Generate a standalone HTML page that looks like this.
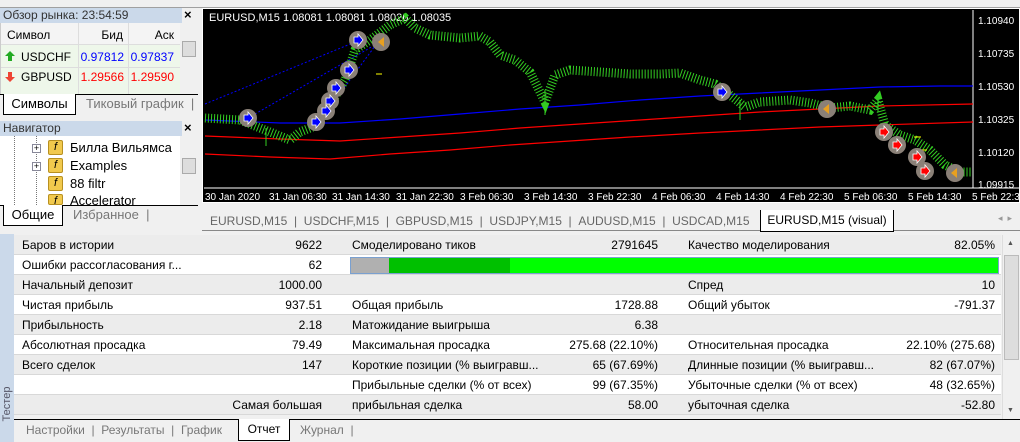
<!DOCTYPE html>
<html><head><meta charset="utf-8"><style>
*{margin:0;padding:0;box-sizing:border-box}
body{width:1020px;height:442px;overflow:hidden;background:#f0f0f0;font-family:"Liberation Sans","DejaVu Sans",sans-serif;font-size:12px;color:#000;position:relative}
.a{position:absolute;white-space:nowrap}
.hdr{background:#cbd9ea;color:#333;font-size:12px;padding-left:3px;line-height:14px}
.tab{position:absolute;font-size:12px;color:#777;line-height:18px}
.row{position:absolute;left:14px;width:987px;height:20px;border-bottom:1px solid #d8d8d8}
.row span{position:absolute;top:3px;white-space:nowrap}
.mw{position:absolute;font-size:12px;text-align:right;width:60px}
</style></head><body>
<div class="a" style="left:0;top:0;width:1020px;height:8px;background:#f0f0f0;border-bottom:1px solid #a0a0a0"></div>
<!-- Market watch -->
<div class="a hdr" style="left:0;top:8px;width:182px;height:15px">Обзор рынка: 23:54:59</div>
<div class="a" style="left:184px;top:7px;font-weight:bold;font-size:13px">×</div>
<div class="a" style="left:0;top:23px;width:198px;height:72px;background:#fff;border:1px solid #ccc"></div>
<div class="a" style="left:1px;top:23px;width:179px;height:22px;background:#f4f4f4;border-bottom:1px solid #ddd"></div>
<div class="a" style="left:7px;top:28px">Символ</div>
<div class="mw" style="left:63px;top:28px">Бид</div>
<div class="mw" style="left:114px;top:28px">Аск</div>
<div class="a" style="left:1px;top:45px;width:179px;height:50px;background:#eef7ea"></div>
<div class="a" style="left:1px;top:67px;width:179px;height:1px;background:#ddd"></div>
<div class="a" style="left:78px;top:23px;width:1px;height:72px;background:#ddd"></div>
<div class="a" style="left:128px;top:23px;width:1px;height:72px;background:#ddd"></div>
<svg class="a" style="left:5px;top:51px" width="10" height="10"><path d="M5,0L10,5H7V10H3V5H0Z" fill="#2a2"/></svg>
<svg class="a" style="left:5px;top:72px" width="10" height="10"><path d="M5,10L10,5H7V0H3V5H0Z" fill="#e43"/></svg>
<div class="a" style="left:21px;top:50px">USDCHF</div>
<div class="mw" style="left:64px;top:50px;color:#00f">0.97812</div>
<div class="mw" style="left:114px;top:50px;color:#00f">0.97837</div>
<div class="a" style="left:21px;top:70px">GBPUSD</div>
<div class="mw" style="left:64px;top:70px;color:#f00">1.29566</div>
<div class="mw" style="left:114px;top:70px;color:#f00">1.29590</div>
<div class="a" style="left:180px;top:23px;width:18px;height:72px;background:#f0f0f0"><div style="margin:18px 2px;width:14px;height:16px;background:#ddd;border:1px solid #aaa"></div></div>
<div class="a" style="left:0;top:94px;width:198px;height:1px;background:#000"></div>
<div class="a" style="left:3px;top:94px;width:73px;height:21px;background:#fff;border:1px solid #000;border-top:none;text-align:center;font-size:13px;line-height:19px">Символы</div>
<div class="tab" style="left:86px;top:95px;font-size:13px">Тиковый график &nbsp;|</div>
<!-- Navigator -->
<div class="a hdr" style="left:0;top:121px;width:182px;height:15px">Навигатор</div>
<div class="a" style="left:184px;top:120px;font-weight:bold;font-size:13px">×</div>
<div class="a" style="left:0;top:136px;width:198px;height:69px;background:#fff"></div>
<div class="a" style="left:14px;top:136px;width:1px;height:69px;border-left:1px dotted #777"></div>
<div class="a" style="left:36px;top:136px;width:1px;height:69px;border-left:1px dotted #777"></div>
<div class="a" style="left:32px;top:144px;width:9px;height:9px;border:1px solid #889;background:#fff;font-size:9px;line-height:7px;text-align:center">+</div>
<div class="a" style="left:32px;top:162px;width:9px;height:9px;border:1px solid #889;background:#fff;font-size:9px;line-height:7px;text-align:center">+</div>
<div class="a" style="left:48px;top:140px;width:15px;height:15px;background:#f1c94d;border:1px solid #b89020;border-radius:2px;font-style:italic;font-size:11px;text-align:center;line-height:13px">f</div>
<div class="a" style="left:48px;top:158px;width:15px;height:15px;background:#f1c94d;border:1px solid #b89020;border-radius:2px;font-style:italic;font-size:11px;text-align:center;line-height:13px">f</div>
<div class="a" style="left:48px;top:176px;width:15px;height:15px;background:#f1c94d;border:1px solid #b89020;border-radius:2px;font-style:italic;font-size:11px;text-align:center;line-height:13px">f</div>
<div class="a" style="left:48px;top:194px;width:15px;height:11px;background:#f1c94d;border:1px solid #b89020;border-radius:2px;font-style:italic;font-size:11px;text-align:center;line-height:13px">f</div>
<div class="a" style="left:70px;top:140px;font-size:13px">Билла Вильямса</div>
<div class="a" style="left:70px;top:158px;font-size:13px">Examples</div>
<div class="a" style="left:70px;top:176px;font-size:13px">88 filtr</div>
<div class="a" style="left:70px;top:193px;font-size:13px;height:12px;overflow:hidden">Accelerator</div>
<div class="a" style="left:180px;top:136px;width:18px;height:69px;background:#f0f0f0"><div style="margin:22px 2px;width:14px;height:16px;background:#ddd;border:1px solid #aaa"></div></div>
<div class="a" style="left:0;top:205px;width:198px;height:1px;background:#000"></div>
<div class="a" style="left:3px;top:205px;width:60px;height:21px;background:#fff;border:1px solid #000;border-top:none;text-align:center;font-size:13px;line-height:19px">Общие</div>
<div class="tab" style="left:73px;top:206px;font-size:13px">Избранное &nbsp;|</div>
<!-- Chart -->
<div class="a" style="left:202px;top:8px;width:818px;height:195px;background:#000;border:1px solid #fff"></div>
<svg class="a" style="left:0;top:0" width="1020" height="210" viewBox="0 0 1020 210">
<line x1="973" y1="10" x2="973" y2="188" stroke="#fff"/>
<line x1="204" y1="188" x2="1020" y2="188" stroke="#fff"/>
<g fill="#fff" font-family="Liberation Sans" font-size="10">
<text x="978" y="24">1.10940</text><text x="978" y="57">1.10735</text><text x="978" y="90">1.10530</text><text x="978" y="123">1.10325</text><text x="978" y="156">1.10120</text><text x="978" y="188">1.09915</text>
<text x="205" y="200">30 Jan 2020</text><text x="269" y="200">31 Jan 06:30</text><text x="332" y="200">31 Jan 14:30</text><text x="396" y="200">31 Jan 22:30</text><text x="460" y="200">3 Feb 06:30</text><text x="524" y="200">3 Feb 14:30</text><text x="588" y="200">3 Feb 22:30</text><text x="652" y="200">4 Feb 06:30</text><text x="716" y="200">4 Feb 14:30</text><text x="780" y="200">4 Feb 22:30</text><text x="844" y="200">5 Feb 06:30</text><text x="908" y="200">5 Feb 14:30</text><text x="972" y="200">5 Feb 22:30</text>
</g>
<text x="209" y="21" fill="#fff" font-family="Liberation Sans" font-size="11">EURUSD,M15  1.08081 1.08081 1.08026 1.08035</text>
<polyline fill="none" stroke="#f00" stroke-width="1.2" points="205,136 280,139 340,141 400,137 460,133 520,128 580,124 640,120 700,116 760,112 820,109 880,106 973,104"/>
<polyline fill="none" stroke="#f00" stroke-width="1.2" points="205,154 270,157 330,159 390,154 450,150 510,145 570,141 630,137 700,133 760,130 820,127 880,125 973,122"/>
<polyline fill="none" stroke="#00f" stroke-width="1.2" points="205,120 280,123 340,123 400,119 460,114 520,109 580,105 640,100 700,96 760,93 820,90 880,87 940,86 973,86"/>
<polyline fill="none" stroke="#33cc22" stroke-width="9" stroke-dasharray="1 2" points="205,118 240,120 265,130 290,140 300,132 315,126 330,105 345,80 355,50 370,40 390,25 405,18 415,28 430,35 460,38 480,36 490,42 500,55 515,60 530,72 540,92 545,102 555,75 570,70 600,72 630,74 660,74 680,73 700,80 715,84 730,95 745,107 760,102 790,100 810,103 830,108 850,106 870,110 878,100 885,125 900,135 915,140 930,150 945,165 960,172 972,172"/>
<g stroke="#33cc22" stroke-width="1"><line x1="545" y1="90" x2="545" y2="115"/><line x1="740" y1="100" x2="740" y2="120"/><line x1="266" y1="128" x2="266" y2="146"/><line x1="878" y1="95" x2="878" y2="112"/></g>
<g stroke="#00f" stroke-width="1" stroke-dasharray="2 2" fill="none"><line x1="205" y1="104" x2="360" y2="40"/><line x1="248" y1="118" x2="380" y2="42"/><line x1="318" y1="123" x2="378" y2="42"/></g>
<line x1="376" y1="74" x2="382" y2="74" stroke="#ff0"/>
<line x1="914" y1="137" x2="921" y2="137" stroke="#ff0"/><line x1="920" y1="150" x2="927" y2="150" stroke="#ff0"/>
<g fill="#8a8077">
<circle cx="248" cy="118" r="9"/><circle cx="316" cy="122" r="9"/><circle cx="326" cy="111" r="9"/><circle cx="330" cy="101" r="9"/><circle cx="336" cy="88" r="9"/><circle cx="349" cy="70" r="9"/><circle cx="358" cy="40" r="9"/><circle cx="381" cy="42" r="9"/>
<circle cx="722" cy="92" r="9"/><circle cx="827" cy="109" r="9"/><circle cx="884" cy="132" r="9"/><circle cx="897" cy="145" r="9"/><circle cx="917" cy="157" r="9"/><circle cx="925" cy="171" r="9"/><circle cx="955" cy="173" r="9"/>
</g>
<g fill="#00f" stroke="#fff" stroke-width="0.8"><path d="M244,115h4v-3l5,6l-5,6v-3h-4z"/><path d="M312,119h4v-3l5,6l-5,6v-3h-4z"/><path d="M322,108h4v-3l5,6l-5,6v-3h-4z"/><path d="M326,98h4v-3l5,6l-5,6v-3h-4z"/><path d="M332,85h4v-3l5,6l-5,6v-3h-4z"/><path d="M345,67h4v-3l5,6l-5,6v-3h-4z"/><path d="M354,37h4v-3l5,6l-5,6v-3h-4z"/><path d="M718,89h4v-3l5,6l-5,6v-3h-4z"/></g>
<g fill="#f00" stroke="#fff" stroke-width="0.8"><path d="M880,129h4v-3l5,6l-5,6v-3h-4z"/><path d="M893,142h4v-3l5,6l-5,6v-3h-4z"/><path d="M913,154h4v-3l5,6l-5,6v-3h-4z"/><path d="M921,168h4v-3l5,6l-5,6v-3h-4z"/></g>
<g fill="#e8a020"><path d="M378,42l6,-5v10z"/><path d="M823,109l6,-5v10z"/><path d="M951,173l6,-5v10z"/></g>
</svg>
<!-- chart tabs -->
<div class="a" style="left:202px;top:210px;width:818px;height:21px;background:#f0f0f0;border-bottom:1px solid #888"></div>
<div class="tab" style="left:210px;top:212px;color:#666">EURUSD,M15 &nbsp;| &nbsp;USDCHF,M15 &nbsp;| &nbsp;GBPUSD,M15 &nbsp;| &nbsp;USDJPY,M15 &nbsp;| &nbsp;AUDUSD,M15 &nbsp;| &nbsp;USDCAD,M15</div>
<div class="a" style="left:760px;top:210px;width:134px;height:22px;background:#fff;border:1px solid #000;border-top:none;text-align:center;line-height:20px">EURUSD,M15 (visual)</div>
<div class="a" style="left:998px;top:213px;color:#999;font-size:9px">◂ &nbsp;▸</div>
<!-- tester -->
<div class="a" style="left:0;top:234px;width:14px;height:208px;background:#cbd9ea"></div>
<div class="a" style="left:-14px;top:398px;transform:rotate(-90deg);font-size:11px;color:#556;width:42px;text-align:center">Тестер</div>
<div class="row" style="top:235px;background:#ececec"><span style="left:8px">Баров в истории</span><span style="right:679px">9622</span><span style="left:338px">Смоделировано тиков</span><span style="right:343px">2791645</span><span style="left:674px">Качество моделирования</span><span style="right:6px">82.05%</span></div>
<div class="row" style="top:255px;background:#fff"><span style="left:8px">Ошибки рассогласования г...</span><span style="right:679px">62</span>
<div style="position:absolute;left:336px;top:2px;width:649px;height:17px;border:1px solid #7aa0d0;background:#00ff00"><div style="position:absolute;left:0;top:0;width:38px;height:15px;background:#b0b0b0"></div><div style="position:absolute;left:38px;top:0;width:121px;height:15px;background:#00c000"></div></div></div>
<div class="row" style="top:275px;background:#ececec"><span style="left:8px">Начальный депозит</span><span style="right:679px">1000.00</span><span style="left:674px">Спред</span><span style="right:6px">10</span></div>
<div class="row" style="top:295px;background:#fff"><span style="left:8px">Чистая прибыль</span><span style="right:679px">937.51</span><span style="left:338px">Общая прибыль</span><span style="right:343px">1728.88</span><span style="left:674px">Общий убыток</span><span style="right:6px">-791.37</span></div>
<div class="row" style="top:315px;background:#ececec"><span style="left:8px">Прибыльность</span><span style="right:679px">2.18</span><span style="left:338px">Матожидание выигрыша</span><span style="right:343px">6.38</span></div>
<div class="row" style="top:335px;background:#fff"><span style="left:8px">Абсолютная просадка</span><span style="right:679px">79.49</span><span style="left:338px">Максимальная просадка</span><span style="right:343px">275.68 (22.10%)</span><span style="left:674px">Относительная просадка</span><span style="right:6px">22.10% (275.68)</span></div>
<div class="row" style="top:355px;background:#ececec"><span style="left:8px">Всего сделок</span><span style="right:679px">147</span><span style="left:338px">Короткие позиции (% выигравш...</span><span style="right:343px">65 (67.69%)</span><span style="left:674px">Длинные позиции (% выигравш...</span><span style="right:6px">82 (67.07%)</span></div>
<div class="row" style="top:375px;background:#fff"><span style="left:338px">Прибыльные сделки (% от всех)</span><span style="right:343px">99 (67.35%)</span><span style="left:674px">Убыточные сделки (% от всех)</span><span style="right:6px">48 (32.65%)</span></div>
<div class="row" style="top:395px;background:#ececec"><span style="right:679px">Самая большая</span><span style="left:338px">прибыльная сделка</span><span style="right:343px">58.00</span><span style="left:674px">убыточная сделка</span><span style="right:6px">-52.80</span></div>
<div class="a" style="left:1002px;top:235px;width:17px;height:185px;background:#f0f0f0;border-left:1px solid #ddd"><div style="position:absolute;top:5px;left:4px;font-size:7px;color:#555">▲</div><div style="position:absolute;top:20px;left:1px;width:15px;height:105px;background:#ddd;border:1px solid #bbb"></div><div style="position:absolute;top:172px;left:4px;font-size:7px;color:#555">▼</div></div>
<div class="a" style="left:14px;top:419px;width:1006px;height:1px;background:#000"></div>
<div class="tab" style="left:26px;top:421px">Настройки &nbsp;| &nbsp;Результаты &nbsp;| &nbsp;График</div>
<div class="a" style="left:238px;top:419px;width:52px;height:22px;background:#fff;border:1px solid #000;border-top:none;text-align:center;line-height:20px">Отчет</div>
<div class="tab" style="left:300px;top:421px">Журнал &nbsp;|</div>
</body></html>
